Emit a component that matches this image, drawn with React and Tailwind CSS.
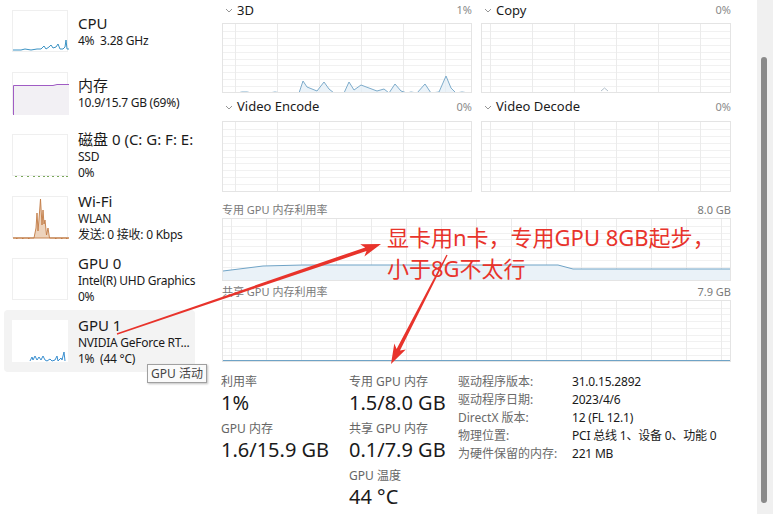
import React from 'react';

const items = [
  { title: 'CPU', lines: ['4%  3.28 GHz'], thumb: 'cpu' },
  { title: '内存', lines: ['10.9/15.7 GB (69%)'], thumb: 'mem' },
  { title: '磁盘 0 (C: G: F: E:', lines: ['SSD', '0%'], thumb: 'disk' },
  { title: 'Wi-Fi', lines: ['WLAN', '发送: 0 接收: 0 Kbps'], thumb: 'wifi' },
  { title: 'GPU 0', lines: ['Intel(R) UHD Graphics', '0%'], thumb: 'none' },
  { title: 'GPU 1', lines: ['NVIDIA GeForce RT...', '1%  (44 °C)'], thumb: 'gpu', active: true },
];

const Thumb = ({ kind }) => (
  <svg width="56" height="42" className="block">
    {kind === 'cpu' && (
      <polyline
        points="0,39 8,39 12,38 18,39 24,38 28,38 31,35 33,38 36,36 38,34 40,37 43,36 45,33 47,38 50,38 52,36 53,29 54,38 56,38"
        fill="none" stroke="#3c93c4" strokeWidth="1"
      />
    )}
    {kind === 'mem' && (
      <g>
        <rect x="0" y="12" width="56" height="30" fill="#f2f0f4" />
        <polyline points="0.5,42 0.5,12.5 40,12.5 44,11.5 56,11.5" fill="none" stroke="#a05cc4" strokeWidth="1" />
      </g>
    )}
    {kind === 'disk' && (
      <g stroke="#7aa85a" strokeWidth="1">
        {[2, 8, 14, 20, 25, 30, 34, 39, 44, 49, 53].map((x) => (
          <line key={x} x1={x} x2={x + 2} y1="41.5" y2="41.5" />
        ))}
      </g>
    )}
    {kind === 'wifi' && (
      <g>
        <polygon
          points="0,41 21,41 23,31 24,16 25,34 26,22 27.5,2 29,28 30,13 31,27 32,23 33.5,38 35,31 36.5,41 56,41"
          fill="#edd3bc" stroke="#c27a44" strokeWidth="0.9"
        />
        {[3, 9, 15, 42, 48, 53].map((x) => (
          <line key={x} x1={x} x2={x + 1.5} y1="41.5" y2="41.5" stroke="#c27a44" />
        ))}
      </g>
    )}
    {kind === 'gpu' && (
      <polyline
        points="18,41 20,37 21,40 23,36 25,40 27,37 29,40 31,36 33,40 35,41 38,39 40,41 43,40 45,36 46,41 49,38 50,40 52,32 53,41"
        fill="none" stroke="#3a8fd0" strokeWidth="1"
      />
    )}
  </svg>
);

const Grid = ({ w, h, vOff, vStep, hStep, children }) => {
  const vs = [];
  for (let x = vOff; x < w; x += vStep) vs.push(x);
  const hs = [];
  for (let y = hStep; y < h - 1; y += hStep) hs.push(Math.round(y));
  return (
    <svg width={w} height={h} className="block">
      {hs.map((y) => (
        <line key={'h' + y} x1="0" x2={w} y1={y + 0.5} y2={y + 0.5} stroke="#f1f1f1" />
      ))}
      {vs.map((x) => (
        <line key={'v' + x} x1={x + 0.5} x2={x + 0.5} y1="0" y2={h} stroke="#ebebeb" />
      ))}
      {children}
    </svg>
  );
};

const Chevron = () => (
  <svg width="8" height="5" className="mr-[4px]">
    <polyline points="1,1 4,4 7,1" fill="none" stroke="#8a8a8a" strokeWidth="0.9" />
  </svg>
);

const PanelHead = ({ title, value, className }) => (
  <div className={`flex items-center justify-between ${className}`}>
    <div className="flex items-center pl-[3px] text-[13px] text-[#1b1b1b]">
      <Chevron />
      {title}
    </div>
    <span className="text-[11px] text-[#8a8a8a]">{value}</span>
  </div>
);

const threeD =
  '0,69 14,69 19,68 24,68 29,69 46,69 52,68 58,69 76,69 80,57 84,63 89,65 94,67 101,58 106,65 111,69 121,69 126,58 131,66 138,61 146,64 154,67 161,65 166,69 172,60 178,67 184,69 188,68 194,69 202,60 208,69 216,68 223,52 228,64 233,69 239,68 246,69 248,69';

function arrowPoints(sx, sy, tx, ty, w0, w1, hl, hw) {
  const dx = tx - sx;
  const dy = ty - sy;
  const len = Math.hypot(dx, dy);
  const ux = dx / len;
  const uy = dy / len;
  const nx = -uy;
  const ny = ux;
  const bx = tx - ux * hl;
  const by = ty - uy * hl;
  const nb = 0.8;
  const p = [
    [sx + (nx * w0) / 2, sy + (ny * w0) / 2],
    [bx + ux * 3 + (nx * w1) / 2, by + uy * 3 + (ny * w1) / 2],
    [bx - ux * nb + (nx * hw) / 2, by - uy * nb + (ny * hw) / 2],
    [tx, ty],
    [bx - ux * nb - (nx * hw) / 2, by - uy * nb - (ny * hw) / 2],
    [bx + ux * 3 - (nx * w1) / 2, by + uy * 3 - (ny * w1) / 2],
    [sx - (nx * w0) / 2, sy - (ny * w0) / 2],
  ];
  return p.map((q) => q.map((v) => v.toFixed(1)).join(',')).join(' ');
}

const StatLabel = ({ children, className = '' }) => (
  <div className={`h-[16px] leading-[16px] text-[12px] text-[#666] ${className}`}>{children}</div>
);
const StatValue = ({ children }) => (
  <div className="h-[26px] leading-[26px] text-[20px] text-[#1a1a1a]">{children}</div>
);

const details = [
  ['驱动程序版本:', '31.0.15.2892'],
  ['驱动程序日期:', '2023/4/6'],
  ['DirectX 版本:', '12 (FL 12.1)'],
  ['物理位置:', 'PCI 总线 1、设备 0、功能 0'],
  ['为硬件保留的内存:', '221 MB'],
];

export default function App() {
  return (
    <div className="relative flex w-[773px] h-[525px] overflow-hidden bg-white font-['Noto_Sans','Noto_Sans_CJK_SC',sans-serif]">
      {/* sidebar */}
      <aside className="w-[222px] shrink-0 pl-[4px]">
        {items.map((it) => (
          <div
            key={it.title}
            className={`flex items-center h-[62px] w-[191px] pl-[8px] rounded-[4px] ${it.active ? 'bg-[#f3f3f3]' : ''}`}
          >
            <div className={`w-[56px] h-[42px] shrink-0 bg-white ${it.active ? '' : 'border border-[#efefef]'}`}>
              <Thumb kind={it.thumb} />
            </div>
            <div className="ml-[10px]">
              <div className="text-[15px] leading-[20px] text-[#1a1a1a] whitespace-nowrap">{it.title}</div>
              {it.lines.map((l) => (
                <div key={l} className="text-[12px] leading-[16px] tracking-[-0.25px] text-[#1a1a1a] whitespace-pre">
                  {l}
                </div>
              ))}
            </div>
          </div>
        ))}
      </aside>

      {/* main panel */}
      <main className="w-[509px] shrink-0">
        <div className="grid grid-cols-2 gap-x-[9px]">
          <div>
            <PanelHead title="3D" value="1%" className="h-[23px] pb-[2px]" />
            <div className="border border-[#e4e4e4]">
              <Grid w={248} h={68} vOff={12} vStep={42} hStep={6.9}>
                <polygon points={threeD + ' 248,68 0,68'} fill="#e3eef6" opacity="0.7" />
                <polyline points={threeD} fill="none" stroke="#7eaccb" strokeWidth="1" />
              </Grid>
            </div>
            <PanelHead title="Video Encode" value="0%" className="h-[28px]" />
            <div className="border border-[#e4e4e4]">
              <Grid w={248} h={69} vOff={12} vStep={42} hStep={6.9} />
            </div>
          </div>
          <div>
            <PanelHead title="Copy" value="0%" className="h-[23px] pb-[2px]" />
            <div className="relative border border-[#e4e4e4]">
              <Grid w={248} h={68} vOff={8} vStep={42} hStep={6.9} />
              <svg width="9" height="5" className="absolute left-[118px] top-[63px]">
                <polyline points="1,4 4.5,1 8,4" fill="none" stroke="#a8b8c4" strokeWidth="0.9" />
              </svg>
            </div>
            <PanelHead title="Video Decode" value="0%" className="h-[28px]" />
            <div className="border border-[#e4e4e4]">
              <Grid w={248} h={69} vOff={8} vStep={42} hStep={6.9} />
            </div>
          </div>
        </div>

        <div className="flex items-end justify-between h-[26px] pb-[1px] text-[11px] text-[#7a7a7a] leading-[15px]">
          <span>专用 GPU 内存利用率</span>
          <span>8.0 GB</span>
        </div>
        <div className="border border-[#e4e4e4]">
          <Grid w={507} h={61} vOff={8} vStep={35} hStep={6.8}>
            <polygon points="0,52 40,47 80,46 335,46 350,50 507,50 507,61 0,61" fill="#eaf2f8" />
            <polyline points="0,52 40,47 80,46 335,46 350,50 507,50" fill="none" stroke="#6fa3c6" strokeWidth="1" />
          </Grid>
        </div>

        <div className="flex items-end justify-between h-[19px] pb-[1px] text-[11px] text-[#7a7a7a] leading-[15px]">
          <span>共享 GPU 内存利用率</span>
          <span>7.9 GB</span>
        </div>
        <div className="border border-[#e4e4e4]">
          <Grid w={507} h={60} vOff={8} vStep={35} hStep={6.7}>
            <line x1="0" x2="507" y1="59.5" y2="59.5" stroke="#6fa3c6" strokeWidth="1" />
          </Grid>
        </div>

        {/* stats */}
        <div className="flex pt-[12px] -ml-[1px]">
          <div className="w-[128px]">
            <StatLabel>利用率</StatLabel>
            <StatValue>1%</StatValue>
            <StatLabel className="mt-[5px]">GPU 内存</StatLabel>
            <StatValue>1.6/15.9 GB</StatValue>
          </div>
          <div className="w-[109px]">
            <StatLabel>专用 GPU 内存</StatLabel>
            <StatValue>1.5/8.0 GB</StatValue>
            <StatLabel className="mt-[5px]">共享 GPU 内存</StatLabel>
            <StatValue>0.1/7.9 GB</StatValue>
            <StatLabel className="mt-[5px]">GPU 温度</StatLabel>
            <StatValue>44 °C</StatValue>
          </div>
          <div className="-mt-[1px]">
            {details.map(([k, v]) => (
              <div key={k} className="flex h-[18px] items-center text-[12px]">
                <span className="w-[114px] text-[#6a6a6a]">{k}</span>
                <span className="text-[#1a1a1a] tracking-[-0.2px]">{v}</span>
              </div>
            ))}
          </div>
        </div>
      </main>

      <div className="flex-1" />

      {/* scrollbar */}
      <div className="w-[16px] h-[514px] shrink-0 bg-[#f0f0f0] pt-[57px] pl-[4px]">
        <div className="w-[6px] h-[446px] rounded-[3px] bg-[#8a8a8a]" />
      </div>

      {/* tooltip */}
      <div className="absolute left-[147px] top-[364px] h-[19px] px-[3px] flex items-center border border-[#a0a0a0] bg-[#fafafa] text-[12px] text-[#444] shadow-[1px_1px_2px_rgba(0,0,0,0.25)]">
        GPU 活动
      </div>

      {/* annotation */}
      <svg width="773" height="525" className="absolute inset-0 pointer-events-none">
        <polygon points={arrowPoints(117, 334, 381, 244, 1.4, 3.8, 19, 13)} fill="#e8332b" />
        <polygon points={arrowPoints(447, 255, 391, 364, 1.4, 3.8, 19, 13)} fill="#e8332b" />
      </svg>
      <div className="absolute left-[387px] top-[222px] text-[22px] leading-[31px] text-[#e8332b] whitespace-nowrap">
        <div>显卡用n卡，专用GPU 8GB起步，</div>
        <div>小于8G不太行</div>
      </div>
    </div>
  );
}
